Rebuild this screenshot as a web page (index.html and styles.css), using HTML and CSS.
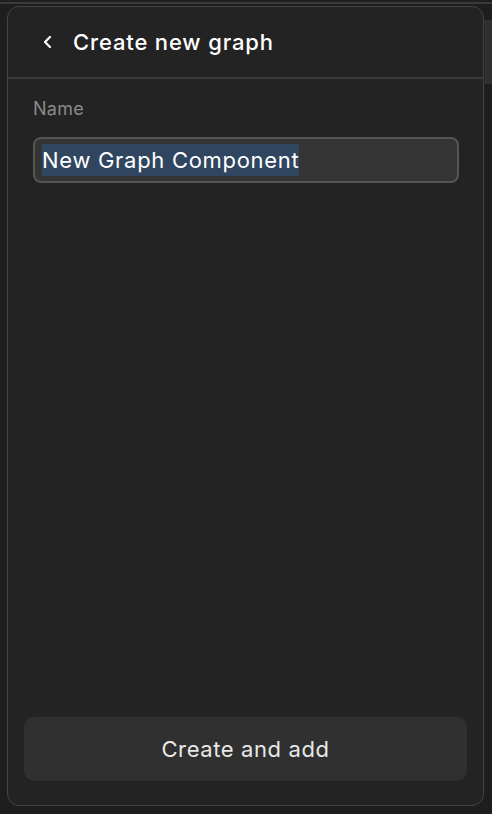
FILE: index.html
```html
<!DOCTYPE html>
<html lang="en">
<head>
  <meta charset="UTF-8">
  <title>Create new graph</title>
  <link rel="stylesheet" href="styles.css">
</head>
<body>
  <div class="topline"></div>
  <div class="frame">
    <div class="panel">
      <header class="panel-header">
        <button class="back" type="button" aria-label="Back">
          <svg width="12" height="14" viewBox="0 0 12 14"><path d="M8 2 L3 7 L8 12" fill="none" stroke="#fff" stroke-width="2.2" stroke-linecap="round" stroke-linejoin="round"/></svg>
        </button>
        <h1>Create new graph</h1>
      </header>

      <div class="panel-body">
        <label class="field-label">Name</label>
        <div class="field"><span class="selected">New Graph Component</span></div>
      </div>

      <div class="panel-footer">
        <button class="primary" type="button">Create and add</button>
      </div>
    </div>
    <div class="scrollbar"></div>
  </div>
</body>
</html>
```

FILE: styles.css
```css
body {
  margin: 0;
  background-color: #1e1e1e;
  font-family: 'Inter', 'Noto Sans', sans-serif;
  color: white;
  height: 814px;
  overflow: hidden;
}

.topline {
  height: 2px;
  margin-top: 2px;
  background-color: #3a3a3a;
}

.frame {
  display: flex;
  padding-top: 2px;
}

.panel {
  margin-left: 7px;
  width: 476px;
  height: 798px;
  border: 1px solid #444;
  border-radius: 12px;
  background-color: #232323;
  display: flex;
  flex-direction: column;
}

.scrollbar {
  margin-top: 14px;
  margin-left: 1px;
  width: 6px;
  height: 64px;
  background-color: #2e2e2e;
  border-left: 1px solid #3a3a3a;
}

.panel-header {
  height: 70px;
  border-bottom: 2px solid #3a3a3a;
  display: flex;
  align-items: center;
  padding-left: 34px;
}

.back {
  background: none;
  border: none;
  padding: 0;
  margin: 0 19px 0 0;
  display: flex;
  cursor: pointer;
}

h1 {
  margin: 0;
  font-size: 22px;
  font-weight: 500;
  color: #fff;
  letter-spacing: 0.85px;
}

.panel-body {
  flex: 1;
  padding: 19px 24px 0 25px;
}

.field-label {
  display: block;
  font-size: 18px;
  color: #8a8a8a;
  font-weight: 400;
  letter-spacing: 0.3px;
  margin-bottom: 18px;
}

.field {
  height: 42px;
  border: 2px solid #555;
  border-radius: 8px;
  background-color: #343434;
  display: flex;
  align-items: center;
  padding-left: 7px;
}

.selected {
  background-color: #2f4560;
  font-size: 22px;
  letter-spacing: 0.7px;
  line-height: 32px;
  color: #fff;
}

.panel-footer {
  padding: 0 16px 24px 16px;
}

.primary {
  width: 100%;
  height: 64px;
  border: none;
  border-radius: 10px;
  background-color: #303030;
  color: #e8e8e8;
  font-family: inherit;
  font-size: 22px;
  font-weight: 400;
  letter-spacing: 0.6px;
  cursor: pointer;
}
```
